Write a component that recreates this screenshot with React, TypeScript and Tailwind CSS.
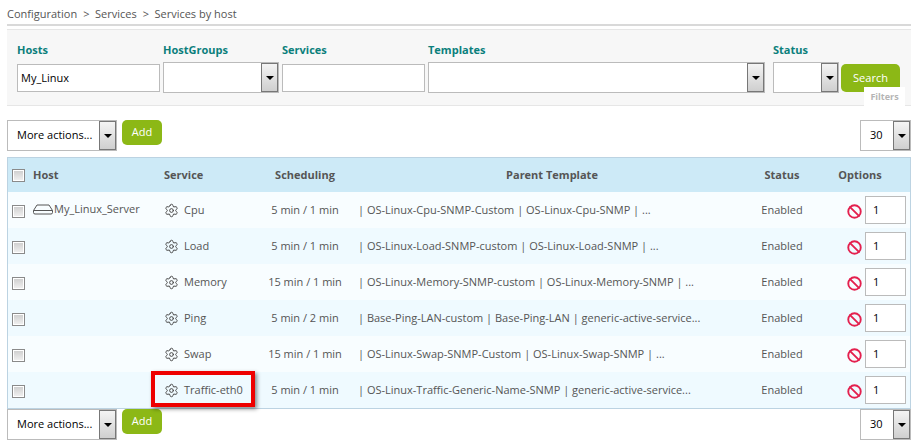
import { Settings, Ban } from "lucide-react";

const rows = [
  { host: "My_Linux_Server", service: "Cpu", sched: "5 min / 1 min", parent: "| OS-Linux-Cpu-SNMP-Custom | OS-Linux-Cpu-SNMP | ..." },
  { host: "", service: "Load", sched: "5 min / 1 min", parent: "| OS-Linux-Load-SNMP-custom | OS-Linux-Load-SNMP | ..." },
  { host: "", service: "Memory", sched: "15 min / 1 min", parent: "| OS-Linux-Memory-SNMP-custom | OS-Linux-Memory-SNMP | ..." },
  { host: "", service: "Ping", sched: "5 min / 2 min", parent: "| Base-Ping-LAN-custom | Base-Ping-LAN | generic-active-service..." },
  { host: "", service: "Swap", sched: "15 min / 1 min", parent: "| OS-Linux-Swap-SNMP-Custom | OS-Linux-Swap-SNMP | ..." },
  { host: "", service: "Traffic-eth0", sched: "5 min / 1 min", parent: "| OS-Linux-Traffic-Generic-Name-SNMP | generic-active-service..." },
];

const grid = "grid grid-cols-[25px_131px_98px_86px_360px_118px_1fr] items-center";

function Arrow() {
  return (
    <div className="flex h-full w-[17px] shrink-0 items-center justify-center border border-[#777777] bg-gradient-to-b from-[#f4f4f4] to-[#cfcfcf]">
      <div className="h-0 w-0 border-x-[4px] border-t-[4px] border-x-transparent border-t-black" />
    </div>
  );
}

function Select({ className, text }: { className: string; text?: string }) {
  return (
    <div className={`flex items-stretch border border-[#bbbbbb] bg-white ${className}`}>
      <div className="flex flex-1 items-center justify-start pl-[9px] text-[11px] text-black">{text}</div>
      <Arrow />
    </div>
  );
}

function Green({ className, children }: { className: string; children: string }) {
  return (
    <div className={`flex items-center justify-center rounded-[5px] bg-[#8cb816] text-[11px] text-white ${className}`}>
      {children}
    </div>
  );
}

function Check() {
  return (
    <div className="flex h-[13px] w-[13px] items-center justify-center border border-[#8a8a8a] bg-white">
      <div className="h-[9px] w-[9px] bg-gradient-to-b from-[#d0d0d0] to-[#efefef]" />
    </div>
  );
}

function Label({ className, children }: { className?: string; children: string }) {
  return <div className={`h-[17px] text-[11px] leading-[16px] font-bold text-[#0b7f7c] ${className ?? ""}`}>{children}</div>;
}

function Toolbar({ className }: { className: string }) {
  return (
    <div className={`flex items-start justify-between ${className}`}>
      <div className="flex items-start gap-[5px]">
        <Select className="h-[31px] w-[110px]" text="More actions..." />
        <Green className="h-[25px] w-[40px]">Add</Green>
      </div>
      <Select className="h-[31px] w-[51px]" text="30" />
    </div>
  );
}

export default function App() {
  return (
    <div className="h-[447px] w-[918px] overflow-hidden bg-white px-[7px] font-['Open_Sans',sans-serif] text-[11px] text-[#555555]">
      <div className="flex h-[26px] w-[904px] items-start gap-[6px] border-b-2 border-[#d9d9d9] pt-[6px] text-[11px] leading-[16px] text-[#555555]">
        <span>Configuration</span>
        <span>&gt;</span>
        <span className="-ml-[0.5px]">Services</span>
        <span>&gt;</span>
        <span className="-ml-[0.5px]">Services by host</span>
      </div>

      <div className="relative mt-[3px] flex h-[77px] w-[904px] items-start border-y border-[#e6e6e6] bg-[#f7f7f7] pl-[10px] pt-[12px]">
        <div className="w-[146px]">
          <Label>Hosts</Label>
          <div className="mt-[5px] flex h-[28px] w-[143px] items-center border border-[#bbbbbb] bg-white pl-[3px] text-[11px] text-black">My_Linux</div>
        </div>
        <div className="w-[119px]">
          <Label>HostGroups</Label>
          <Select className="mt-[3px] h-[31px] w-[116px]" />
        </div>
        <div className="w-[146px]">
          <Label>Services</Label>
          <div className="mt-[5px] h-[28px] w-[143px] border border-[#bbbbbb] bg-white" />
        </div>
        <div className="w-[345px]">
          <Label>Templates</Label>
          <Select className="mt-[3px] h-[31px] w-[337px]" />
        </div>
        <div className="w-[68px]">
          <Label>Status</Label>
          <Select className="mt-[3px] h-[31px] w-[66px]" />
        </div>
        <Green className="mt-[22px] h-[28px] w-[59px]">Search</Green>
        <div className="absolute right-[6px] top-[57px] flex h-[19px] w-[41px] items-center justify-center bg-white text-[9px] font-bold text-[#b5b5b5]">Filters</div>
      </div>

      <Toolbar className="mt-[14px] h-[31px] w-[904px]" />

      <div className="mt-[6px] w-[904px] border border-[#bcd3e2]">
        <div className={`${grid} h-[34px] bg-[#cdeaf7] font-bold text-[#555555]`}>
          <div className="pl-[4px]"><Check /></div>
          <div>Host</div>
          <div>Service</div>
          <div className="text-center">Scheduling</div>
          <div className="pl-[48px] text-center">Parent Template</div>
          <div className="pl-[30px] text-center">Status</div>
          <div className="pr-[16px] text-center">Options</div>
        </div>
        {rows.map((r, i) => (
          <div key={r.service} className={`${grid} h-[36px] ${i % 2 === 0 ? "bg-[#f8fdff]" : "bg-[#effaff]"}`}>
            <div className="pl-[4px] pt-[3px]"><Check /></div>
            <div className="flex items-center gap-[1px] pb-[2px]">
              {r.host && (
                <svg width="20" height="11" viewBox="0 0 20 11" fill="none" stroke="#555555" strokeWidth="1">
                  <path d="M0.5 6.5 L4 1 H16 L19.5 6.5 V8.5 Q19.5 10 18 10 H2 Q0.5 10 0.5 8.5 Z M0.5 6.5 H19.5" />
                </svg>
              )}
              <span>{r.host}</span>
            </div>
            <div className="relative flex items-center gap-[5px] self-stretch pt-[1px]">
              <Settings size={15} strokeWidth={1.6} color="#4a4a4a" />
              <span>{r.service}</span>
              {r.service === "Traffic-eth0" && (
                <div className="absolute left-[-13px] top-[-1px] h-[36px] w-[104px] border-[4px] border-[#ee0000] shadow-[2px_2px_4px_rgba(0,0,0,0.45)]" />
              )}
            </div>
            <div className="text-center">{r.sched}</div>
            <div className="truncate pl-[10px]">{r.parent}</div>
            <div className="pl-[30px] text-center">Enabled</div>
            <div className="flex items-center justify-end gap-[3px] pr-[4px]">
              <Ban size={15} strokeWidth={3} color="#e4204e" className="mt-[3px]" />
              <div className="flex h-[28px] w-[41px] items-center border border-[#bbbbbb] bg-white pl-[7px] text-black">1</div>
            </div>
          </div>
        ))}
      </div>

      <Toolbar className="h-[31px] w-[904px]" />
    </div>
  );
}
